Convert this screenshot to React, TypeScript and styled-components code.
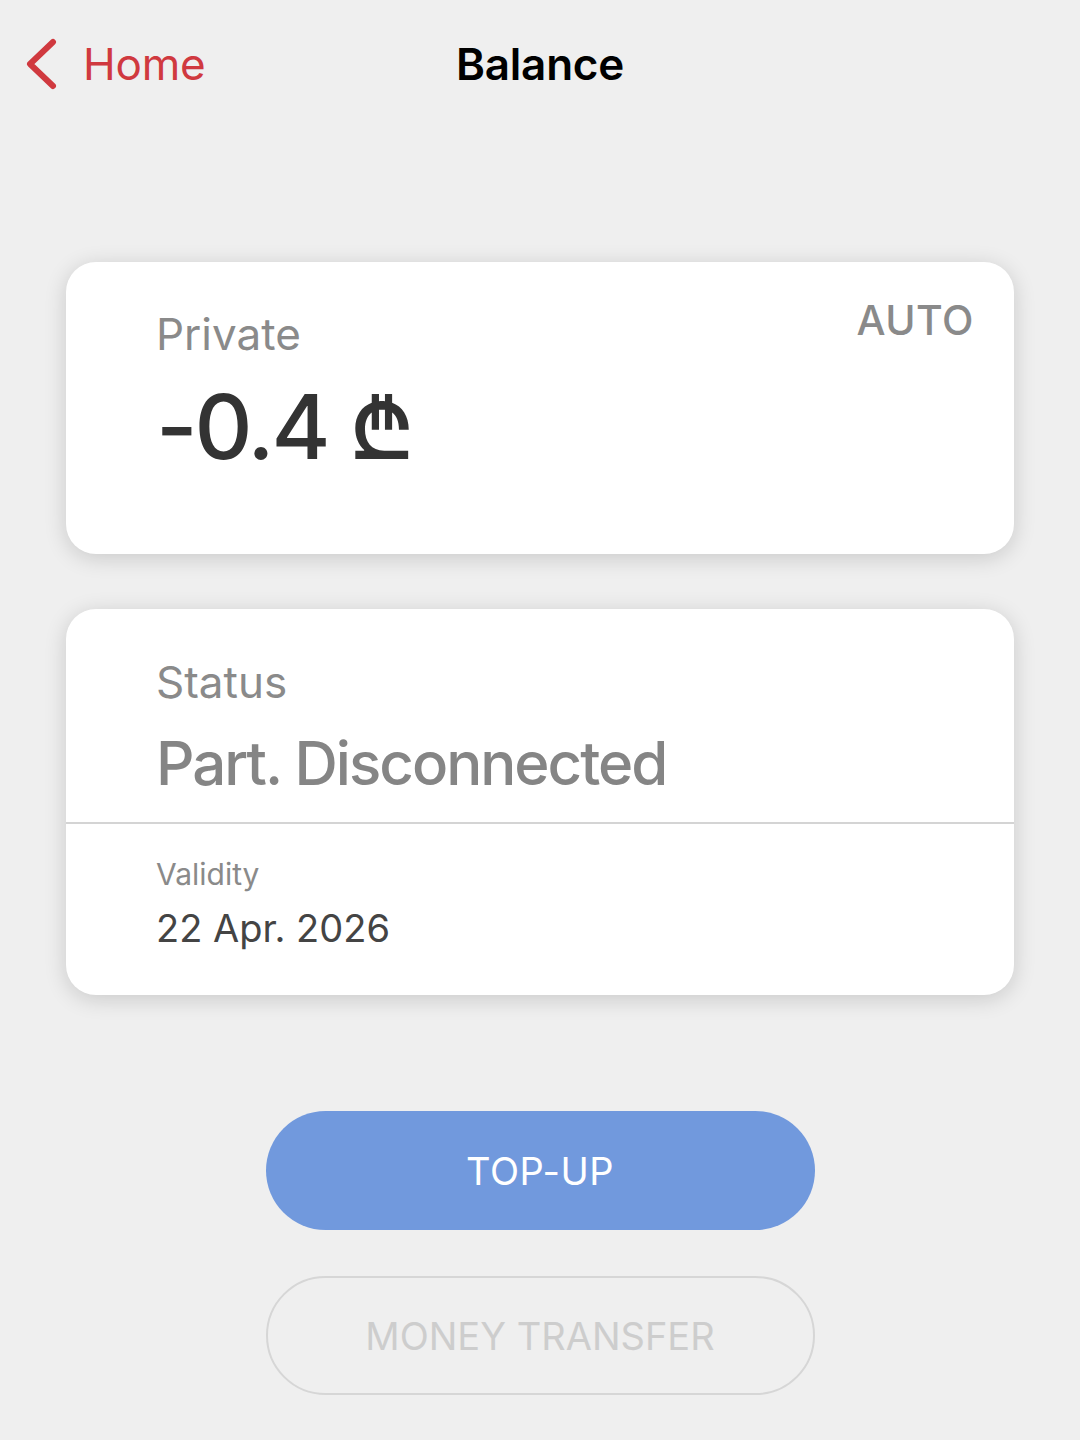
import React from "react";
import styled, { createGlobalStyle } from "styled-components";

const GlobalStyle = createGlobalStyle`
  body {
    margin: 0;
    background: #efefef;
    font-family: Inter, "DejaVu Sans", "Noto Sans", sans-serif;
  }
`;

const Page = styled.div`
  width: 1080px;
  min-height: 1440px;
  background: #efefef;
`;

const Header = styled.header`
  display: grid;
  grid-template-columns: 1fr auto 1fr;
  align-items: center;
  height: 128px;
  padding: 0 25px;
  box-sizing: border-box;
`;

const BackLink = styled.a`
  display: flex;
  align-items: center;
  gap: 24px;
  color: #d0393f;
  font-size: 44px;
  text-decoration: none;
  letter-spacing: -0.2px;
`;

const Title = styled.h1`
  margin: 0;
  font-size: 44px;
  font-weight: 600;
  color: #000;
  letter-spacing: -0.2px;
`;

const Cards = styled.main`
  display: flex;
  flex-direction: column;
  gap: 55px;
  padding: 134px 66px 0;
`;

const Card = styled.section`
  background: #fff;
  border-radius: 30px;
  box-shadow: 0 4px 22px rgba(0, 0, 0, 0.16);
  overflow: hidden;
`;

const CardBody = styled.div<{ $pt: number; $pb: number }>`
  position: relative;
  padding: ${(p) => p.$pt}px 40px ${(p) => p.$pb}px 90px;
`;

const Label = styled.div<{ $size: number }>`
  font-size: ${(p) => p.$size}px;
  color: #8a8a8a;
  line-height: 1.2;
`;

const Amount = styled.div`
  font-size: 90px;
  font-weight: 500;
  color: #333;
  line-height: 1.2;
  letter-spacing: -3px;
  margin-top: 12px;
`;

const Auto = styled.span`
  position: absolute;
  top: 33px;
  right: 40px;
  font-size: 41px;
  font-weight: 500;
  color: #8a8a8a;
  letter-spacing: 0.5px;
`;

const StatusValue = styled.div`
  font-size: 60px;
  font-weight: 500;
  color: #858585;
  line-height: 1.2;
  letter-spacing: -2px;
  margin-top: 18px;
`;

const Divider = styled.hr`
  margin: 0;
  border: none;
  border-top: 2px solid #d4d4d4;
`;

const DateValue = styled.div`
  font-size: 38px;
  color: #444;
  line-height: 1.2;
  margin-top: 14px;
`;

const Actions = styled.div`
  display: flex;
  flex-direction: column;
  align-items: center;
  gap: 46px;
  margin-top: 116px;
`;

const PillButton = styled.button<{ $primary?: boolean }>`
  width: 549px;
  height: 119px;
  border-radius: 60px;
  font-family: inherit;
  font-size: 38px;
  letter-spacing: ${(p) => (p.$primary ? "0.5px" : "0")};
  cursor: pointer;
  background: ${(p) => (p.$primary ? "#7199dd" : "transparent")};
  color: ${(p) => (p.$primary ? "#fff" : "#cdcdcd")};
  border: ${(p) => (p.$primary ? "none" : "2px solid #d6d6d6")};
`;

const Chevron = () => (
  <svg width="34" height="52" viewBox="0 0 34 52" fill="none">
    <path
      d="M28 4 L5 26 L28 48"
      stroke="#d0393f"
      strokeWidth="6"
      strokeLinecap="round"
      strokeLinejoin="round"
    />
  </svg>
);

export default function App() {
  return (
    <Page>
      <GlobalStyle />
      <Header>
        <BackLink href="#">
          <Chevron />
          Home
        </BackLink>
        <Title>Balance</Title>
        <span />
      </Header>
      <Cards>
        <Card>
          <CardBody $pt={46} $pb={73}>
            <Label $size={44}>Private</Label>
            <Amount>-0.4 ₾</Amount>
            <Auto>AUTO</Auto>
          </CardBody>
        </Card>
        <Card>
          <CardBody $pt={47} $pb={23}>
            <Label $size={44}>Status</Label>
            <StatusValue>Part. Disconnected</StatusValue>
          </CardBody>
          <Divider />
          <CardBody $pt={32} $pb={44}>
            <Label $size={30}>Validity</Label>
            <DateValue>22 Apr. 2026</DateValue>
          </CardBody>
        </Card>
      </Cards>
      <Actions>
        <PillButton $primary>TOP-UP</PillButton>
        <PillButton>MONEY TRANSFER</PillButton>
      </Actions>
    </Page>
  );
}
